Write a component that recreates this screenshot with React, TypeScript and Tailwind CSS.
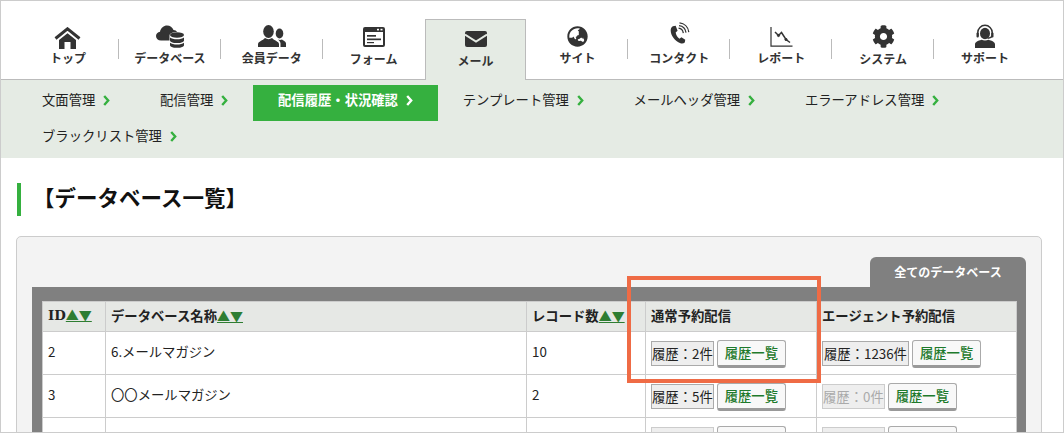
import { FaCog, FaGlobeAsia } from "react-icons/fa";
import type { ReactNode } from "react";

const FONT = "font-['Noto_Sans_CJK_JP','Noto_Sans',sans-serif]";

function HomeIcon() {
  return (
    <svg width="27" height="22" viewBox="0 0 27 22" fill="#333">
      <path fill="none" stroke="#333" strokeWidth="3" d="M1.500 11.500 13.500 1.800l12 9.700" />
      <path d="M5 13 13.500 6.200 22 13v9h-5.500v-7h-6v7H5z" />
    </svg>
  );
}

function DbCloudIcon() {
  return (
    <svg width="30" height="23" viewBox="0 0 30 23" fill="#333">
      <path d="M6 15.500c-3 0-5-2-5-4.500 0-2.300 1.700-4 4-4.300C5.800 3 8.800.5 12 .5c3 0 5.500 1.800 6.500 4.500 1.500 0 3 .8 3.500 2-4 0-7.500 1.300-7.500 3.500v5z" />
      <ellipse cx="22" cy="10" rx="7" ry="2.700" />
      <path d="M15 12.500c1.500 1.200 4 1.800 7 1.800s5.500-.6 7-1.800v3c0 1.400-3 2.600-7 2.600s-7-1.200-7-2.600z" />
      <path d="M15 17.800c1.500 1.200 4 1.800 7 1.800s5.500-.6 7-1.800v2.400c0 1.400-3 2.600-7 2.600s-7-1.200-7-2.600z" />
    </svg>
  );
}

function UsersIcon() {
  return (
    <svg width="28" height="22" viewBox="0 0 28 22" fill="#333">
      <ellipse cx="10.500" cy="6.500" rx="5.300" ry="6.500" />
      <path d="M0 22v-3c0-2.500 5-3.500 7-6 2 1.500 5 1.500 7 0 2 2.500 7 3.500 7 6v3z" />
      <ellipse cx="21.500" cy="8.500" rx="3.800" ry="5" />
      <path d="M22.500 22v-3.500c0-1.500-1-2.700-2.500-4 1.300.6 2.700.6 4 0 .6.8 4 1.800 4 4V22z" />
    </svg>
  );
}

function FormIcon() {
  return (
    <svg width="22" height="20" viewBox="0 0 22 20" fill="#333">
      <path fillRule="evenodd" d="M2 0h18a2 2 0 0 1 2 2v16a2 2 0 0 1-2 2H2a2 2 0 0 1-2-2V2a2 2 0 0 1 2-2zM2 5v13h18V5z" />
      <rect x="14" y="1.800" width="2" height="1.600" fill="#fff" />
      <rect x="17.500" y="1.800" width="2" height="1.600" fill="#fff" />
      <rect x="4" y="8" width="9" height="1.700" />
      <rect x="4" y="11.500" width="14" height="1.700" />
      <rect x="4" y="15" width="7" height="1.200" />
    </svg>
  );
}

function MailIcon() {
  return (
    <svg width="22" height="16" viewBox="0 0 22 16">
      <rect width="22" height="16" rx="2" fill="#333" />
      <path fill="none" stroke="#e5ebe4" strokeWidth="2" d="M0 3.500 11 10.500 22 3.500" />
    </svg>
  );
}

function PhoneIcon() {
  return (
    <svg width="23" height="23" viewBox="0 0 24 24" fill="none" stroke="#333">
      <path
        fill="#333"
        stroke="none"
        d="M5 4.500 8 4l2 5-2 2c.3 2.500 1.800 5 4 6.500l2-1.500 4 2.500-.5 3c-1 1-3 1.300-4.500.7C7 19.500 2.800 14 2.800 8.500 2.800 6.800 3.800 5.200 5 4.500z"
      />
      <path strokeWidth="1.300" d="M11 6.500c2.500.3 4.500 2.200 5 5" />
      <path strokeWidth="1.300" d="M11.500 3.800c3.800.4 6.700 3.200 7.300 7.200" />
      <path strokeWidth="1.300" d="M12 1c5 .5 9 4.200 9.700 9.500" />
    </svg>
  );
}

function ChartIcon() {
  return (
    <svg width="23" height="20" viewBox="0 0 23 20" fill="none" stroke="#333">
      <path strokeWidth="1.200" d="M1 0v19.200h21.500" />
      <path strokeWidth="1.500" d="M5 5l3.500 3.500L11.500 5.500l4.500 7 4 3" />
      <circle cx="8.500" cy="8.500" r="1.100" fill="#333" />
      <circle cx="16" cy="12.500" r="1.100" fill="#333" />
    </svg>
  );
}

function SupportIcon() {
  return (
    <svg width="20" height="24" viewBox="0 0 20 24" fill="#333">
      <path d="M0 24v-3.500c0-2.500 3-3.600 6.500-4.700 2 1 5 1 7 0 3.500 1.100 6.500 2.200 6.500 4.700V24z" />
      <ellipse cx="10" cy="9.500" rx="5" ry="5.800" />
      <path fill="none" stroke="#333" strokeWidth="1.500" d="M2.800 12V8.500a7.200 7.200 0 0 1 14.400 0V11c0 1.500-1.500 3-4.700 3.300" />
      <rect x="1.500" y="8.500" width="2.300" height="5" rx="1" />
      <rect x="16.200" y="8.500" width="2.300" height="5" rx="1" />
    </svg>
  );
}

function Chevron(props: { white?: boolean }) {
  return (
    <svg
      width="7"
      height="11"
      viewBox="0 0 7 11"
      fill="none"
      className={`ml-[8px] ${props.white ? "text-white" : "text-[#35b03f]"}`}
    >
      <path stroke="currentColor" strokeWidth="2.400" d="M1.200 1 5.200 5.500 1.200 10" />
    </svg>
  );
}

type NavItem = { label: string; icon: ReactNode; iconClass: string; labelClass?: string; active?: boolean };

const navItems: NavItem[] = [
  { label: "トップ", icon: <HomeIcon />, iconClass: "pb-0" },
  { label: "データベース", icon: <DbCloudIcon />, iconClass: "pb-[1px]" },
  { label: "会員データ", icon: <UsersIcon />, iconClass: "pb-[2px]" },
  { label: "フォーム", icon: <FormIcon />, iconClass: "pb-[2px]", labelClass: "mt-[1px]" },
  { label: "メール", icon: <MailIcon />, iconClass: "pb-[3px]", labelClass: "mt-[2px]", active: true },
  { label: "サイト", icon: <FaGlobeAsia size={21} color="#333" />, iconClass: "pb-[2px]" },
  { label: "コンタクト", icon: <PhoneIcon />, iconClass: "pb-[4px]" },
  { label: "レポート", icon: <ChartIcon />, iconClass: "pb-[2px]" },
  { label: "システム", icon: <FaCog size={23} color="#333" />, iconClass: "pb-[1px]", labelClass: "mt-[1px]" },
  { label: "サポート", icon: <SupportIcon />, iconClass: "pb-[1px]" },
];

const subItems = [
  "文面管理",
  "配信管理",
  "配信履歴・状況確認",
  "テンプレート管理",
  "メールヘッダ管理",
  "エラーアドレス管理",
  "ブラックリスト管理",
];

function Sort() {
  return <span className="text-[#2e7d32] underline text-[13px] font-normal">▲▼</span>;
}

function Count(props: { text: string; off?: boolean }) {
  return (
    <span
      className={`mt-[1px] block h-[25px] whitespace-nowrap border bg-[#eee] text-[13.330px] leading-[23px] ${
        props.off ? "border-[#ccc] text-[#aaa]" : "border-[#aaa] text-[#222]"
      } ${props.text.length > 6 ? "px-[1px]" : ""}`}
    >
      {props.text}
    </span>
  );
}

function HistoryButton() {
  return (
    <button className="h-[28px] whitespace-nowrap rounded-[3px] border border-b-[3px] border-[#aaa] border-b-[#999] bg-[#f8f8f8] px-[7px] text-[13.330px] font-medium leading-[22px] text-[#1e7a2c]">
      履歴一覧
    </button>
  );
}

function Actions(props: { text: string; off?: boolean }) {
  return (
    <div className="flex items-start gap-[3px] pt-[2px]">
      <Count text={props.text} off={props.off} />
      <HistoryButton />
    </div>
  );
}

function Cell(props: { children?: ReactNode; className?: string }) {
  return (
    <td className={`border border-[#ccc] px-[5px] text-[13.330px] text-[#222] ${props.className ?? ""}`}>
      {props.children}
    </td>
  );
}

const rows = [
  { id: "2", name: "6.メールマガジン", count: "10", normal: "履歴：2件", agent: "履歴：1236件", agentOff: false },
  { id: "3", name: "〇〇メールマガジン", count: "2", normal: "履歴：5件", agent: "履歴：0件", agentOff: true },
];

export default function App() {
  return (
    <div className={`relative box-border h-[433px] w-[1064px] overflow-hidden border border-[#ccc] bg-white ${FONT}`}>
      <nav className="flex h-[79px] items-end border-b border-[#bbb] pl-[16px]">
        {navItems.map((item, i) => (
          <div
            key={item.label}
            className={`relative -mb-px flex h-[61px] w-[101.900px] flex-col items-center ${
              item.active ? "border border-b-0 border-[#bbb] bg-[#e5ebe4]" : ""
            }`}
          >
            <div className={`flex h-[30px] items-end justify-center ${item.iconClass}`}>{item.icon}</div>
            <span className={`text-[12px] font-bold leading-[18px] text-[#333] ${item.labelClass ?? ""}`}>
              {item.label}
            </span>
            {i < navItems.length - 1 && !item.active && !navItems[i + 1].active ? (
              <span className="absolute right-0 top-[20px] h-[20px] w-px bg-[#bbb]" />
            ) : null}
          </div>
        ))}
      </nav>

      <div className="flex h-[78px] flex-wrap content-start bg-[#e5ebe4] pl-[16px] pt-[5px]">
        {subItems.map((label) => {
          const active = label === "配信履歴・状況確認";
          return (
            <div
              key={label}
              className={`flex h-[36px] items-center pb-[6px] pl-[25px] pr-[24.700px] text-[13.330px] ${
                active ? "bg-[#35b03f] font-bold text-white" : "text-[#222]"
              }`}
            >
              {label}
              <Chevron white={active} />
            </div>
          );
        })}
      </div>

      <h1 className="ml-[16px] mt-[25px] h-[33px] border-l-[4px] border-[#35b03f] pl-[12px] text-[21.500px] font-bold leading-[27px] text-[#111]">
        【データベース一覧】
      </h1>

      <section className="ml-[15px] mt-[20px] h-[300px] w-[1026px] rounded-[5px] border border-[#ccc] bg-[#f3f3f3] pl-[15px] pt-[20px]">
        <div className="flex w-[994px] justify-end">
          <div className="flex h-[30px] w-[156px] items-center justify-center rounded-t-[6px] bg-[#808080] pb-[1px] text-[12px] font-bold text-white">
            全てのデータベース
          </div>
        </div>
        <div className="h-[200px] w-[994px] bg-[#808080] px-[10px] pt-[14px]">
          <table className="w-[974px] table-fixed border-collapse bg-white">
            <colgroup>
              <col className="w-[63px]" />
              <col className="w-[421px]" />
              <col className="w-[119px]" />
              <col className="w-[171px]" />
              <col className="w-[200px]" />
            </colgroup>
            <thead>
              <tr className="h-[30px] bg-[#e6e8e5] text-left">
                <Cell className="pb-[2px] font-bold">
                  <span className="font-['DejaVu_Serif',serif]">ID</span>
                  <Sort />
                </Cell>
                <Cell className="pb-[2px] font-bold">データベース名称<Sort /></Cell>
                <Cell className="pb-[2px] font-bold">レコード数<Sort /></Cell>
                <Cell className="pb-[2px] font-bold">通常予約配信</Cell>
                <Cell className="pb-[2px] font-bold">エージェント予約配信</Cell>
              </tr>
            </thead>
            <tbody>
              {rows.map((row) => (
                <tr key={row.id} className="h-[43px]">
                  <Cell className="pb-[2px]">{row.id}</Cell>
                  <Cell className="pb-[2px]">{row.name}</Cell>
                  <Cell className="pb-[2px]">{row.count}</Cell>
                  <Cell><Actions text={row.normal} /></Cell>
                  <Cell><Actions text={row.agent} off={row.agentOff} /></Cell>
                </tr>
              ))}
              <tr className="h-[43px]">
                <Cell>&nbsp;</Cell>
                <Cell />
                <Cell />
                <Cell><Actions text="履歴：0件" off /></Cell>
                <Cell><Actions text="履歴：0件" off /></Cell>
              </tr>
            </tbody>
          </table>
        </div>
      </section>

      <div className="absolute left-[626px] top-[275px] h-[107px] w-[194px] border-[4px] border-[#ef6b45]" />
    </div>
  );
}
